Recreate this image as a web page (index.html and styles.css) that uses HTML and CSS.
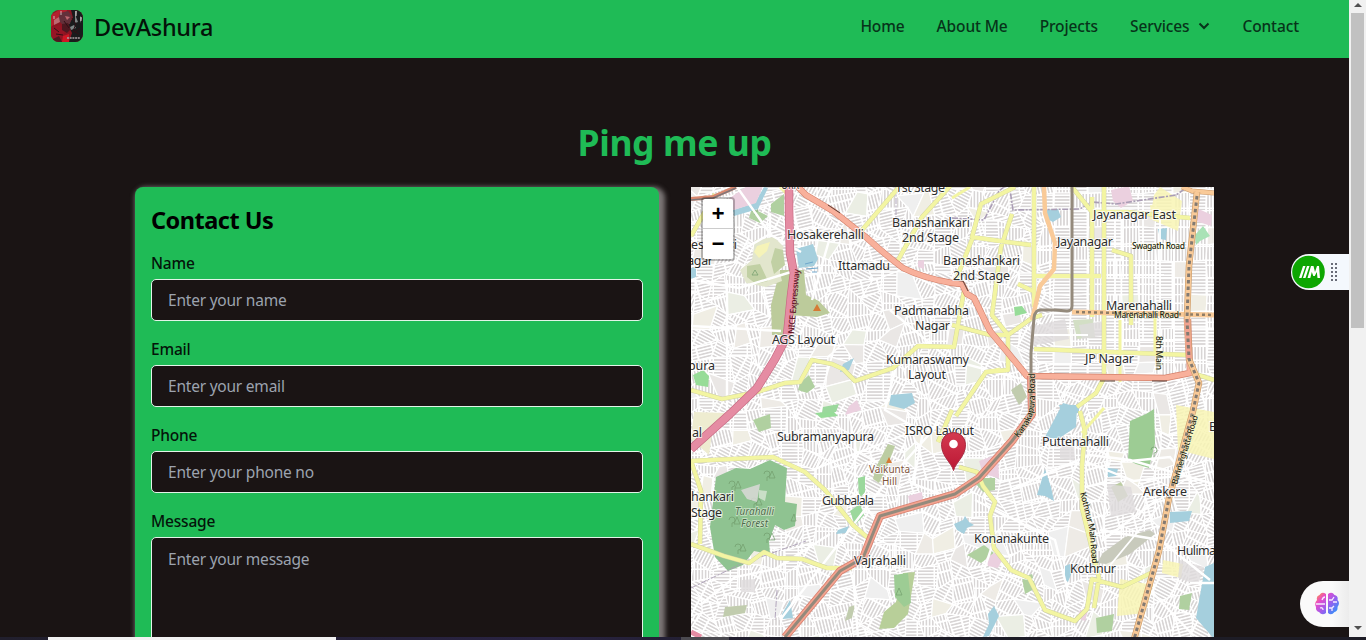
FILE: index.html
```html
<!DOCTYPE html>
<html lang="en">
<head>
<meta charset="utf-8">
<title>DevAshura - Contact</title>
<link rel="stylesheet" href="styles.css">
</head>
<body>
<div class="screen">
  <div class="viewport">
    <div class="page">
      <header class="navbar">
        <a class="brand">
          <svg class="brand-logo" viewBox="0 0 32 32">
            <defs><clipPath id="logoClip"><rect width="32" height="32" rx="8"/></clipPath></defs>
            <g clip-path="url(#logoClip)">
              <rect width="32" height="32" fill="#8e1522"/>
              <path d="M20 0h12v32H18l3-9-4-8 5-7z" fill="#191b1c"/>
              <path d="M0 5l8-5h8l-3 10-7 2-6 5z" fill="#b3212e"/>
              <path d="M9 3l8-2 4 5-2 8-7 1-5-5z" fill="#63303a"/>
              <path d="M3 10l5-3 1 5-6 3zM14 6l5 1-3 3z" fill="#bd6870"/>
              <path d="M0 17l9-2 5 6-2 6-12 2z" fill="#951525"/>
              <path d="M11 14l6-1 3 6-4 4-5-3zM2 29l6-3 3 6H1z" fill="#4d1820"/>
              <path d="M12 26l6-2v8h-7z" fill="#d01624"/>
              <path d="M24 1l2 0-1 6 2 5-3 1zM29 6l2 2-2 5zM19 17l4-2 2 3-5 2z" fill="#7d8585"/>
              <path d="M25 1v5M30 7v4M10 1v4M3 6v3" stroke="#ddc5c6" stroke-width=".9"/>
              <path d="M3 18l5 4M13 11l5 7M21 8l4 6-3 7 6 3M5 24l7 1M24 22l5-4" stroke="#301116" fill="none"/>
              <path d="M16 28h13" stroke="#aaa1a2" stroke-width="1.500" stroke-dasharray="2 .7"/>
            </g>
          </svg>
          <span class="brand-name">DevAshura</span>
        </a>
        <nav class="nav-links">
          <a class="nav-link">Home</a>
          <a class="nav-link">About Me</a>
          <a class="nav-link">Projects</a>
          <a class="nav-link nav-dropdown">Services
            <svg class="chevron" viewBox="0 0 12 8"><path d="M1.500 1.500 6 6l4.500-4.500" fill="none" stroke="#07331a" stroke-width="2"/></svg>
          </a>
          <a class="nav-link">Contact</a>
        </nav>
      </header>
      <main class="content">
        <h1 class="title">Ping me up</h1>
        <div class="columns">
          <form class="card">
            <h2 class="card-title">Contact Us</h2>
            <div class="field"><label class="label">Name</label><input class="input" placeholder="Enter your name"></div>
            <div class="field"><label class="label">Email</label><input class="input" placeholder="Enter your email"></div>
            <div class="field"><label class="label">Phone</label><input class="input" placeholder="Enter your phone no"></div>
            <div class="field"><label class="label">Message</label><textarea class="input message" placeholder="Enter your message"></textarea></div>
          </form>
          <div class="map">
            <svg class="map-canvas" viewBox="691 187 523 450">
              <defs>
                <pattern id="h0" width="17" height="3.200" patternUnits="userSpaceOnUse"><rect width="17" height="3.200" fill="#fff"/><rect width="15.500" height="1.200" y="1" fill="#cbc8c8"/></pattern>
                <pattern id="h1" width="3.200" height="19" patternUnits="userSpaceOnUse"><rect width="3.200" height="19" fill="#fff"/><rect width="1.200" height="17.500" x="1" fill="#cbc8c8"/></pattern>
                <pattern id="h2" width="18" height="3.200" patternUnits="userSpaceOnUse" patternTransform="rotate(28)"><rect width="18" height="3.200" fill="#fff"/><rect width="16" height="1.200" y="1" fill="#cbc8c8"/></pattern>
                <pattern id="h3" width="17" height="3.200" patternUnits="userSpaceOnUse" patternTransform="rotate(-62)"><rect width="17" height="3.200" fill="#fff"/><rect width="15" height="1.200" y="1" fill="#cbc8c8"/></pattern>
                <pattern id="h4" width="16" height="3.200" patternUnits="userSpaceOnUse" patternTransform="rotate(-14)"><rect width="16" height="3.200" fill="#fff"/><rect width="14" height="1.200" y="1" fill="#cbc8c8"/></pattern>
                <pattern id="h5" width="16" height="3.200" patternUnits="userSpaceOnUse" patternTransform="rotate(76)"><rect width="16" height="3.200" fill="#fff"/><rect width="14" height="1.200" y="1" fill="#cbc8c8"/></pattern>
                <path id="ys" d="M691 390l31 9 35-7 28-9 15-1 12-22 20 4 11 5 12 12 38-13 25-22 36 1 10-56M862 230l37-43M897 262l25-45 30-33M691 461l82-4 32 15 20 18 28 35 15 13M691 461l10 30-1 53M691 544l33 12 25 7 15-11 13 6 25 1 25 9h25M691 236l24-42M952 325l38 10h18l24-17 10-3M1008 335v35l-22 2-30 44M952 410l-14 32M1034 187v120M1015 187l-34 17-9 33 35 5 24 3M955 282l18-45M1012 214l-11 33-9 68 16 20M1018 284l15 7M1034 276h67M1034 349l154 6M1092 197v120M1104 187v190M1112 250l19 6v69M1072 187l20 25h35l63 6M1104 378l-8 15-19 14M1080 411l5 20-3 34v43l17 70-5 30M1189 372l25 8M959 467l18 5 6 14 12 16-5 14 4 32 17 22 18 8 16 32 30 11 12-12 5-30 30 8 29-14"/>
                <linearGradient id="pinFill" x2="0" y2="1"><stop stop-color="#d43a50"/><stop offset="1" stop-color="#bb1734"/></linearGradient>
              </defs>
              <rect x="691" y="187" width="523" height="450" fill="#fff"/>
              <g id="blocks"></g>

              <g fill="#b0d0a0">
                <path d="M716 477l20-9 14 1 20-9 17 8-2 34 12 2-2 22-11 4-9-5-6 16 1 13-16-3-11 14-15 6-13-14-5-30z" fill="#8fc391"/>
                <path d="M1130 421l16-7 8-5 1 34-6 25-13-4-8-4z" fill="#9dcc94"/>
                <path d="M903 573l12-1-7 42-14 14-15 1 5-17 12-10z" fill="#b8cf99"/>
                <path d="M894 575l14-2 3 30-7 4-9-10z" fill="#9dcc94"/>
                <path d="M771 305l9-35h24l2 25 13 6 11 12-13 4-27-2-4 20h-14z" fill="#bccb9b"/>
                <path d="M755 240l19-3 10 10-7 14 5 20-16 6-20-4-6-13 12-10z" fill="#e2e6cd"/>
                <path d="M775 248l8 2 2 15-11 9-3-12zM747 266l13-2 8 17-12 3-9-7z" fill="#c1d0a4"/>
                <path d="M771 204l13-10v22l-13-4zM752 208l16 8-8 7-11-5z"/>
                <path d="M800 383l9-8 6 12-8 6-9-3zM753 420l17-6 1 14-12 4zM979 478h16v12l-12 2-7-8zM967 555l17-10 10 8-13 10zM1022 578l10-4 4 14-11 6zM1096 618l18-4-2 17-15 2zM1180 596l12-3-3 17-10-1z"/>
                <path d="M876 467l12-23 7 2-8 21-8 16-6-4zM1111 487l10-5 7 14-10 6z" fill="#bccda2"/>
                <path d="M693 375l10-5 6 6-1 11-12-2zM1014 307l8-1 5 7-12 3zM815 413l18-2 5 5-17 2z" fill="#97dc98"/>
                <path d="M1073 320l20-1 2 18-18 2z" fill="#d3dfc5"/>
                <path d="M1103 553l22-16 25-7 5 4-25 20-24 10-9-1z" fill="#c8cabc"/>
                <path d="M725 607l22-2-2 8-22 4zM849 607l6-2-3 13-7 3zM1011 390l10-7 6 14-8 8z" fill="#c1ccae"/>
                <path d="M858 478l7-2v16l-6 7zM850 511l10-7 4 11-9 10zM823 407l16-3-3 8-14 1z" fill="#9bd89c"/>
                <path d="M1196 245l-1-10 8-9 7 10-10 5z" fill="#a9e2b6"/>
              </g>
              <g fill="none" stroke="#739d6d" stroke-width=".7">
                <path d="M729 484a3 3 0 1 1 3 3v4m6-10l-3 7h6zm-3 7v3M764 474a3 3 0 1 1 3 3v4m5-10l-3 7h6zM729 520a3 3 0 1 1 3 3v4m5-10l-3 7h6zM751 501a3 3 0 1 1 3 3v4m5-10l-3 7h6zM735 547a3 3 0 1 1 3 3v4m5-10l-3 7h6zM764 536a3 3 0 1 1 3 3v4m5-10l-3 7h6zM794 514l-3 7h5zM899 588l-3 7h6zM1151 450a3 3 0 1 1 3 3v4M755 205l-3 6h6zm0 6v4M755 270l-3 5h6z"/>
              </g>
              <g fill="#a5cfdd">
                <path d="M796 249l17-5 5 15-4 7-15 2zM1047 210l11-1 3 8-8 5-6-3zM1158 229l9-1-1 12-6-1zM843 364l11-6-5 12-9 2zM891 395l21-2 3 10-11 6-15-4zM1045 437l18-34 14 4-1 20-18 12zM1059 405h20v8l-17 1zM1037 495l8-26 6 18 3 14-9-5zM954 524l9-4 2-4 4 6 5 3-7 3-3 6-7-4zM1170 512l22-1-3 10-19 2zM1205 567l9-4v76l-18-21zM1107 468l11 1-2 7-8 1zM988 614l6-8 5 10-10 20-6 1 6-13zM1065 566l5-2 2 8-4 10-3-2zM782 614l8-14 3 18-10 1zM838 530l11-4-3 7-10 1zM691 268l5-1v10l-5 2zM733 210l22-7 9-16 4 1-10 21-24 7z"/>
                <path d="M813 262l-8 2M818 268l-12 1M817 272h-5" stroke="#6ea6cb"/>
              </g>
              <g fill="#f8f4b4">
                <path d="M1176 405l38 7v47l-36-9zM1160 187l22 14-4 30-28-12 4-24zM1120 579l33 6-8 28-28 3zM1163 560l20 4-2 14-19-5zM757 246l13-4-3 9-8 7-5-6zM1150 205l30 4-2 14-26-4z" fill-opacity=".85"/>
                <path d="M694 412l31 1-13 20-3 22-18-16z" fill="#eeecd0"/>
              </g>
              <g fill="#ebd0df">
                <path d="M727 200l20-14h16l-7 17-22 7-15-4zM857 400l4 10-16 5 4-9zM979 461l19-7 1 24-16-4zM986 558l10-6 7 6-5 10-10-2zM1111 190l18-4 4 15-12 7-8-7zM1192 206l20 9-1 11-18-6zM918 261l6-1v9l-6-2zM908 496l14-4 1 10-13 3zM1080 610l8 1-3 10-8-3z"/>
              </g>
              <g fill="#dedbdc">
                <path d="M1030 327l35-8 4 20-38 7zM1079 325l25-4 3 14-25 4zM1107 484l24 3 5 25-25 5zM1060 448l14-5 1 18-15-3zM742 580l13-1v13h-14zM1180 560l24 7-6 18-20-7zM741 490l19-6-3 18-10-3z" fill-opacity=".8"/>
              </g>
              <path d="M767 491l-8-1v8l6 3zM768 555" fill="#c9dfc7"/>

              <!-- local streets -->
              <g fill="none" stroke="#fff" stroke-width="2.400">
                <path d="M691 280l48 8 52-16M737 187l34 48 30 17M691 326l90 5M727 280v130M691 520l20-7M770 214v20l-26 15M700 605l35-28 40-8 55-35M780 620l100-130 60-68M855 440v50l20 30M853 575l5 62M900 350l-15 60 38 22-10 52 38 14M812 470l100-38M975 500l80 40 15 60M1010 490l80-35 40 5 84 24M1084 461l50 20 50-6M1108 440l-5 100 54-40M1100 530l60 10 50 40M1190 583l24 0M1150 590l44 46M1130 461l40-4 16 20M890 310l60 50 76 20M832 230l-20 70M994 540l-10 30 50 10"/>
                <path d="M838 335l-20 70M1102 575l58-70M1034 335h54M1115 215v160M1143 190v150M1160 210v170M1174 240v140M1050 230v70M1034 250h38M1104 275h60M1104 340h84" stroke-width="1.800"/>
              </g>

              <!-- administrative lines -->
              <g fill="none" stroke="#aa9db5" stroke-width="1.600" stroke-dasharray="6 1.500 2 1.500">
                <path d="M952 218l32 2 15-29 10-8 4 27 67-1 11-7 25 2 60-9 10-7"/>
                <path d="M691 588l50-24 65-23M777 590l-2 30M896 187v40" stroke-width=".9"/>
              </g>

              <!-- secondary roads -->
              <g fill="none" stroke-linejoin="round">
                <use href="#ys" stroke="#cfd2a0" stroke-width="4.600"/>
                <use href="#ys" stroke="#f3f5a2" stroke-width="3.800"/>
                <path d="M1104 408l-22 25M1000 369l-14 3M1120 320v62M1155 317v36M780 187l10 10M970 187l-18 11" stroke="#f3f5a2" stroke-width="3"/>
              </g>

              <!-- trunk roads and motorway -->
              <g fill="none" stroke-linejoin="round">
                <path d="M789 187v22l1 44 4 20-3 23-4 40-12 23-18 29-27 26-39 35" stroke="#c66a82" stroke-width="8.500"/>
                <path d="M789 187v22l1 44 4 20-3 23-4 40-12 23-18 29-27 26-39 35" stroke="#e58ca3" stroke-width="7.200"/>
                <path d="M691 632l10 5" stroke="#e58ca3" stroke-width="5"/>
                <path d="M798 187l8 8 27 16 34 27q16 15 36 30 20 10 49 15l10 1 5 10 7 4 16 33 37 45 138 2 25-5-2-54" stroke="#d4816b" stroke-width="6.400"/>
                <path d="M798 187l8 8 27 16 34 27q16 15 36 30 20 10 49 15l10 1 5 10 7 4 16 33 37 45 138 2 25-5-2-54" stroke="#f8b09b" stroke-width="5.200"/>
                <path d="M691 199l22-2 23-10" stroke="#d98970" stroke-width="4"/>
                <path d="M691 200l22-2 23-10" stroke="#80777a" stroke-width="1.500"/>
                <path d="M828 205l12 8M954 280l9 1 5 10M1100 381h15M1152 381h15" stroke="#4d332c" stroke-width=".9"/>
                <path d="M1044 187l1 26 10 30-1 26-14 17-8 34" stroke="#f9ca98" stroke-width="4.500"/>
                <path d="M1072 312l142 3" stroke="#f9ca98" stroke-width="5"/>
                <path d="M1076 312l138 3" stroke="#8d7c67" stroke-width="2.500" stroke-dasharray="3 3"/>
                <path d="M1182 187l10 4 22 2" stroke="#ca9869" stroke-width="5"/>
                <path d="M1182 187l10 4 22 2" stroke="#f9ca98" stroke-width="4"/>
                <path d="M1197 192l-8 74-2 53 2 40 10 24-6 28-24 87-10 53-26 92" stroke="#c99a67" stroke-width="6.500"/>
                <path d="M1197 192l-8 74-2 53 2 40 10 24-6 28-24 87-10 53-26 92" stroke="#f9ca98" stroke-width="5.300"/>
                <path d="M1187 319l2 40" stroke="#f1a18f" stroke-width="5.500"/>
                <path d="M1197 196l-8 70-2 53 2 40 10 24-6 28-24 87-10 53-26 92" stroke="#827a72" stroke-width="3" stroke-dasharray="3.500 3"/>
                <path d="M1031 376l1 38-20 27-33 37-24 16-75 22-10 24-7 18-23 13-55 66" stroke="#d77e6c" stroke-width="8"/>
                <path d="M1031 376l1 38-20 27-33 37-24 16-75 22-10 24-7 18-23 13-55 66" stroke="#f3a390" stroke-width="6.500"/>
                <path d="M1072 187v119q0 5-5 5l-12-1h-13q-7-1-8 8l-3 35v58l1 3-20 27-33 37-24 16-75 22-17 42-23 13-55 66" stroke="#948a7c" stroke-width="3"/>
              </g>
              <path d="M813 311l4-7 4 7zM886 463l3-6 3 6z" fill="#d57b35"/>

              <g class="place">
                <text x="781" y="188.500" textLength="18" lengthAdjust="spacingAndGlyphs">ORR</text>
                <text x="895" y="192" textLength="50">1st Stage</text>
                <text x="787" y="239" textLength="77">Hosakerehalli</text>
                <text x="892" y="227" textLength="78">Banashankari</text>
                <text x="902" y="242" textLength="57">2nd Stage</text>
                <text x="943" y="265" textLength="77">Banashankari</text>
                <text x="953" y="280" textLength="57">2nd Stage</text>
                <text x="838" y="270" textLength="52">Ittamadu</text>
                <text x="894" y="315" textLength="75">Padmanabha</text>
                <text x="915" y="330" textLength="35">Nagar</text>
                <text x="772" y="344" textLength="63">AGS Layout</text>
                <text x="886" y="364" textLength="83">Kumaraswamy</text>
                <text x="908" y="379" textLength="38">Layout</text>
                <text x="673" y="249" textLength="64">Rajeshwari</text>
                <text x="678" y="265" textLength="35">Nagar</text>
                <text x="688" y="370" textLength="27">pura</text>
                <text x="692" y="437" textLength="10">al</text>
                <text x="1093" y="219" textLength="83">Jayanagar East</text>
                <text x="1057" y="246" textLength="56">Jayanagar</text>
                <text x="1106" y="310" textLength="66">Marenahalli</text>
                <text x="1085" y="363" textLength="49">JP Nagar</text>
                <text x="777" y="441" textLength="97">Subramanyapura</text>
                <text x="905" y="435" textLength="69">ISRO Layout</text>
                <text x="822" y="505" textLength="52">Gubbalala</text>
                <text x="691" y="501" textLength="43">hankari</text>
                <text x="691" y="517" textLength="31">Stage</text>
                <text x="854" y="565" textLength="52">Vajrahalli</text>
                <text x="974" y="543" textLength="75">Konanakunte</text>
                <text x="1070" y="573" textLength="46">Kothnur</text>
                <text x="1042" y="446" textLength="67">Puttenahalli</text>
                <text x="1143" y="496" textLength="44">Arekere</text>
                <text x="1177" y="555" textLength="52">Hulimavu</text>
                <text x="1209" y="431">B</text>
              </g>
              <g class="road-label">
                <text transform="translate(794 334) rotate(-85)" textLength="65" class="motorway">NICE Expressway</text>
                <text x="1132" y="249" textLength="53">Swagath Road</text>
                <text x="1114" y="318" textLength="65">Marenahalli Road</text>
                <text transform="translate(1156 336) rotate(90)" textLength="34">8th Main</text>
                <text transform="translate(1177 485) rotate(-73)" textLength="72">Bannerghatta Road</text>
                <path id="kothnurPath" d="M1080 493l9 35 4 44" fill="none"/>
                <text><textPath href="#kothnurPath" textLength="72">Kothnur Main Road</textPath></text>
                <path id="kanakaPath" d="M1018 438q17-18 17-40v-30" fill="none"/>
                <text><textPath href="#kanakaPath" textLength="69">Kanakapura Road</textPath></text>
              </g>
              <g class="forest"><text x="735" y="515" textLength="39">Turahalli</text><text x="741" y="527" textLength="27">Forest</text></g>
              <g class="hill"><text x="869" y="473" textLength="41">Vaikunta</text><text x="882" y="485" textLength="15">Hill</text></g>

              <path d="M953.500 470.500c-2-8-12-14-12-26a12 12 0 0 1 24 0c0 12-10 18-12 26z" fill="url(#pinFill)" stroke="#a92a40"/>
              <circle cx="953.500" cy="444" r="4.300" fill="#fff"/>
            </svg>
            <div class="zoom-control">
              <a class="zoom-btn zoom-in">+</a>
              <a class="zoom-btn">−</a>
            </div>
          </div>
        </div>
      </main>
      <aside class="helper-tab">
        <svg viewBox="0 0 58 36" width="58" height="36">
          <path d="M18 0h40v36H18a18 18 0 0 1 0-36z" fill="#f4f8fd"/>
          <circle cx="17.500" cy="18" r="16.300" fill="#0da602"/>
          <path d="M8 24l4-12h2.500l-4 12zM12 24l4-12h2.500l-4 12zM16.500 24l3.500-12h2.500l1.500 6 2-6h2L29 24h-2.500l-.7-6-2 4h-1.500l-1.500-4-1.500 6z" fill="#fff"/>
          <path d="M41 9v18M45 9v18" stroke="#696c78" stroke-width="2" stroke-dasharray="2 2"/>
        </svg>
      </aside>
      <aside class="brain-tab">
        <svg viewBox="0 0 24 24" width="24" height="24">
          <defs><linearGradient id="brainFill" x1="0" y1="0" x2="1" y2=".85"><stop offset=".05" stop-color="#ff943e"/><stop offset=".3" stop-color="#e74acb"/><stop offset=".62" stop-color="#9760ef"/><stop offset="1" stop-color="#2997fa"/></linearGradient></defs>
          <path d="M11 2Q7-1 4.500 3 1 4 2 8q-3 3-1 7-.5 4 3 5 3 4 7 1zM13 2q4-3 6.500 1 4 1 3 5 3 3 0 7 .5 4-3 5-3 4-6.500 1z" fill="url(#brainFill)"/>
          <path d="M1 12h9M7 8q1-3 3-3M5 16q3-1 3 2M14 8h3l2-3M22 10h-4M14 16h3v3M17 16l2-2" fill="none" stroke="#f7eaff" stroke-width="1.300"/>
        </svg>
      </aside>
    </div>
    <div class="scrollbar">
      <i class="arrow arrow-up"></i><div class="thumb"></div><i class="arrow arrow-down"></i>
    </div>
  </div>
  <div class="taskbar"><div class="task-search"></div><div class="task-active"></div></div>
</div>
<script src="map.js"></script>
</body>
</html>
```
FILE: styles.css
```css
* { box-sizing: border-box; }
body { margin: 0; background: #1a1414; font-family: "Noto Sans", "Open Sans", sans-serif; font-size: 16px; }
.screen { width: 1366px; height: 640px; display: flex; flex-direction: column; overflow: hidden; }
.viewport { height: 637px; display: flex; overflow: hidden; }
.page { position: relative; width: 1349px; height: 637px; overflow: hidden; background: #1a1414; }
.navbar { height: 58px; padding: 0 50px 4px 51px; background: #1fbb56; display: flex; align-items: center; justify-content: space-between; }
.brand { display: flex; align-items: center; gap: 11px; padding-bottom: 2px; }
.brand-logo { width: 32px; height: 32px; display: block; }
.brand-name { font-size: 23.5px; line-height: 30px; padding-top: 2px; font-weight: 500; color: #041209; letter-spacing: -.3px; }
.nav-links { display: flex; gap: 32px; padding-bottom: 2px; }
.nav-link { color: #07331a; font-size: 15.5px; font-weight: 500; line-height: 24px; letter-spacing: -.12px; white-space: nowrap; }
.nav-dropdown { display: flex; align-items: center; gap: 9px; }
.chevron { width: 12px; height: 8px; }
.content { width: 1079px; margin-left: 135px; padding-top: 60px; }
.title { margin: 0 0 21px; height: 48px; line-height: 48px; font-size: 35.5px; font-weight: 700; text-align: center; color: #1fbb56; letter-spacing: -.4px; }
.columns { display: grid; grid-template-columns: 524px 523px; gap: 32px; }
.card { height: 600px; padding: 16px; border-radius: 8px; background: #1fbb56; box-shadow: 3px 3px 5px 3px #7c7777; }
.card-title { margin: 0 0 15px; font-size: 23.5px; line-height: 34px; font-weight: 700; color: #000; letter-spacing: -.5px; }
.field { height: 86px; display: flex; flex-direction: column; }
.label { flex: none; height: 27px; line-height: 22px; font-size: 15.5px; font-weight: 500; color: #04140a; letter-spacing: -.2px; }
.input { flex: none; width: 492px; height: 42px; padding: 0 16px; border: 1px solid #e2f4e8; border-radius: 5px; background: #1a1414; font: 15.5px "Noto Sans", sans-serif; letter-spacing: -.22px; outline: none; }
.input::placeholder { color: #9ca3af; opacity: 1; }
.message { height: 150px; padding-top: 10px; resize: none; }
.map { position: relative; height: 450px; overflow: hidden; }
.map-canvas { display: block; width: 523px; height: 450px; }
.place { font: 12.5px "Noto Sans", sans-serif; fill: #2d2d2d; stroke: rgba(255, 255, 255, .75); stroke-width: 2px; paint-order: stroke; }
.road-label { font: 500 8.5px "Noto Sans", sans-serif; fill: #241f12; }
.road-label text { stroke: rgba(255, 255, 220, .6); stroke-width: 1px; paint-order: stroke; }
.road-label .motorway { fill: #5d1728; stroke: none; }
.forest { font: italic 10px "Noto Sans", sans-serif; fill: #4d6a4b; stroke: #cbe3c7; stroke-width: 1.5px; paint-order: stroke; }
.hill { font: 10px "Noto Sans", sans-serif; fill: #80543c; stroke: #fff; stroke-width: 1.5px; paint-order: stroke; }
.zoom-control { position: absolute; left: 10px; top: 10px; width: 34px; height: 64px; border: 2px solid rgba(0, 0, 0, .25); background-clip: padding-box; border-radius: 4px; overflow: hidden; }
.zoom-btn { display: block; height: 30px; background: #fff; color: #000; text-align: center; font: bold 22px/34px "Liberation Mono", monospace; overflow: hidden; }
.zoom-in { border-bottom: 1px solid #ccc; }
.helper-tab { position: absolute; right: 0; top: 254px; width: 58px; height: 36px; }
.brain-tab { position: absolute; right: 0; top: 581px; width: 49px; height: 46px; padding: 11px 0 0 15px; border-radius: 23px 0 0 23px; background: linear-gradient(90deg, #fafafa 65%, #ececec); }
.scrollbar { width: 17px; height: 637px; background: #f1f1f1; display: flex; flex-direction: column; align-items: center; }
.arrow { width: 0; height: 0; border: 4px solid transparent; }
.arrow-up { border-top: 0; border-bottom-color: #505050; margin: 3px 0 6px; }
.thumb { width: 13px; height: 315px; background: #c1c1c1; }
.arrow-down { border-bottom: 0; border-top-color: #505050; margin-top: auto; margin-bottom: 7px; }
.taskbar { height: 3px; background: linear-gradient(90deg, #211f2d, #292342 40%, #1d1c26 60%); display: flex; }
.task-search { width: 288px; margin-left: 48px; background: #f2f2f2; }
.task-active { width: 48px; margin-left: 345px; background: #4b4a50; }
```
FILE: map.js
```js
// Fills the map with residential street blocks.
(function () {
  var seed = 41;
  function rnd() { seed = (seed * 16807) % 2147483647; return seed / 2147483647; }
  var step = 17, pts = [], cols = 33, rows = 29, out = "";
  for (var r = 0; r <= rows; r++) {
    pts[r] = [];
    for (var c = 0; c <= cols; c++) {
      var x = 680 + c * step, y = 176 + r * step;
      var grid = x > 1040 && y < 375;
      var j = grid ? 2 : 15;
      pts[r][c] = [(x + (rnd() - 0.5) * j).toFixed(1), (y + (rnd() - 0.5) * j).toFixed(1)];
    }
  }
  var tints = ["#eeebe6", "#eae7e5", "#f0eee4", "#ebeee4", "#efefef"];
  for (r = 0; r < rows; r++) {
    for (c = 0; c < cols; c++) {
      var px = 680 + c * step, py = 176 + r * step, k = rnd(), fill;
      if (k < 0.12) fill = tints[Math.floor(rnd() * tints.length)];
      else if (px > 1040 && py < 375) fill = "url(#h" + (k < 0.6 ? 0 : 1) + ")";
      else fill = "url(#h" + Math.floor(rnd() * 6) + ")";
      var p = [pts[r][c], pts[r][c + 1], pts[r + 1][c + 1], pts[r + 1][c]];
      out += '<polygon points="' + p.join(" ") + '" fill="' + fill + '" stroke="#fff" stroke-width="1.2"/>';
    }
  }
  document.getElementById("blocks").innerHTML = out;
})();
```
